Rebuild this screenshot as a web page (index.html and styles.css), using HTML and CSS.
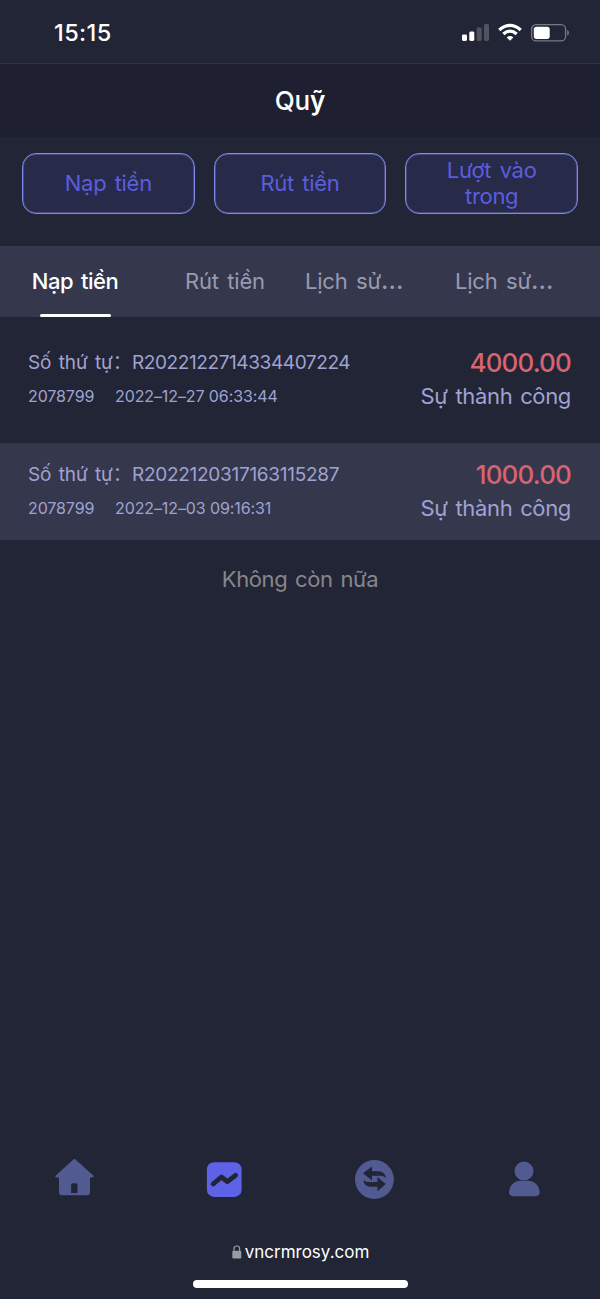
FILE: index.html
```html
<!DOCTYPE html>
<html lang="vi">
<head>
<meta charset="utf-8">
<title>Quỹ</title>
<link rel="stylesheet" href="styles.css">
</head>
<body>
<div class="screen">
  <div class="status">
    <span class="clock">15:15</span>
    <svg class="status-icons" width="108" height="20" viewBox="0 0 108 20">
      <g fill="#fff"><rect x="0" y="11.5" width="5" height="6.5" rx="1.4"/><rect x="7.3" y="8.5" width="5" height="9.5" rx="1.4"/></g>
      <g fill="#52535f"><rect x="14.7" y="4.5" width="5" height="13.5" rx="1.4"/><rect x="22" y="1" width="5" height="17" rx="1.4"/></g>
      <g fill="none" stroke="#fff" stroke-width="3.3"><path d="M37.3 6.9Q48 -2.2 58.7 6.9"/><path d="M41.3 11Q48 5.2 54.7 11"/></g>
      <path d="M44.7 14.4Q48 11.5 51.3 14.4L48 17.8Z" fill="#fff"/>
      <rect x="69.6" y="1.6" width="34" height="16.3" rx="4.5" fill="none" stroke="#777984" stroke-width="1.3"/>
      <rect x="71.8" y="3.7" width="15.9" height="12.2" rx="2.6" fill="#fff"/>
      <path d="M105.2 7Q107 7.7 107 9.8T105.2 12.6Z" fill="#777984"/>
    </svg>
  </div>
  <header class="title">Qu<b>ỹ</b></header>
  <div class="actions">
    <div class="action">Nạp tiền</div>
    <div class="action">Rút tiền</div>
    <div class="action">Lượt vào trong</div>
  </div>
  <nav class="tabs">
    <div class="tab active">Nạp tiền</div>
    <div class="tab">Rút tiền</div>
    <div class="tab clipped">Lịch sử<span class="dots">…</span></div>
    <div class="tab clipped">Lịch sử<span class="dots">…</span></div>
  </nav>
  <main class="records">
    <section class="record first">
      <div class="info">
        <div class="serial"><span class="label">Số thứ tự：</span><span>R2022122714334407224</span></div>
        <div class="meta"><span class="uid">2078799</span><span>2022–12–27 06:33:44</span></div>
      </div>
      <div class="result">
        <div class="amount">4000.00</div>
        <div class="state">Sự thành công</div>
      </div>
    </section>
    <section class="record alt">
      <div class="info">
        <div class="serial"><span class="label">Số thứ tự：</span><span class="number-wide">R2022120317163115287</span></div>
        <div class="meta"><span class="uid">2078799</span><span>2022–12–03 09:16:31</span></div>
      </div>
      <div class="result">
        <div class="amount">1000.00</div>
        <div class="state">Sự thành công</div>
      </div>
    </section>
    <p class="end">Không còn nữa</p>
  </main>
  <nav class="dock">
    <svg width="40" height="40" viewBox="0 0 40 40"><path fill="#515a91" fill-rule="evenodd" d="M18.4 .5Q19.4 -.6 20.5 .5L38.6 16.8Q39 18.3 37.3 18.5H35V33.2Q35 36.3 31.8 36.3H7.2Q4 36.3 4 33.2V18.5H1.6Q-.2 18.3 .5 16.8ZM16.1 34H22.5V25.8Q22.5 24.2 20.9 24.2H17.7Q16.1 24.2 16.1 25.8Z"/></svg>
    <svg width="40" height="40" viewBox="0 0 40 40"><rect x="1.9" y="3.2" width="34.7" height="34.7" rx="7.2" fill="#5d62e6"/><path d="M8.2 25L16.4 18L22.3 22.7L30.6 16.3" fill="none" stroke="#222535" stroke-width="4.8" stroke-linecap="round" stroke-linejoin="round"/></svg>
    <svg width="40" height="40" viewBox="0 0 40 40"><circle cx="19.4" cy="20.5" r="19.4" fill="#515a91"/><path fill="#222535" d="M8 14.3L17 7.5V12.2H23C27.8 12.2 30.8 15.1 30.8 19.1Q28.8 16.8 25 16.8H17V21.5ZM30.8 25.1L22.4 32.2V27.8H16.5C11.5 27.8 8.6 25 8.6 21.2Q10.8 23.1 14.5 23.1H22.4V18Z"/></svg>
    <svg width="40" height="40" viewBox="0 0 40 40"><circle cx="19" cy="12.1" r="9.5" fill="#515a91"/><path fill="#515a91" d="M4 34.2C4 27 9 21.8 15 21.8H23.5C29.5 21.8 34.7 27 34.7 34.2Q33.5 37.2 30 37.2H8.7Q5 37.2 4 34.2Z"/></svg>
  </nav>
  <footer class="browser">
    <div class="address">
      <svg width="10" height="14" viewBox="0 0 10 14"><rect x=".3" y="5.8" width="9" height="7.7" rx="1.2" fill="#9a9ba5"/><path d="M2 6.5V3.8Q2 1 4.8 1T7.6 3.8V6.5" fill="none" stroke="#9a9ba5" stroke-width="1.2"/></svg>
      <span>vncrmrosy.com</span>
    </div>
    <div class="home-bar"></div>
  </footer>
</div>
</body>
</html>
```
FILE: styles.css
```css
* { box-sizing: border-box; }
body { margin: 0; background: #222535; font-family: Inter, "Noto Sans CJK SC", sans-serif; }
.screen { width: 600px; height: 1299px; display: flex; flex-direction: column; background: #222535; overflow: hidden; }
.status { height: 64px; flex: none; display: flex; justify-content: space-between; padding: 0 30px 0 54px; border-bottom: 1px solid #30323d; }
.clock { font-size: 23.5px; line-height: 28px; padding-top: 19px; font-weight: 500; color: #fff; letter-spacing: 0.4px; }
.status-icons { margin-top: 23px; }
.title { height: 73px; flex: none; text-align: center; color: #fff; background: #1e2031; font-size: 26px; line-height: 74px; font-weight: 450; letter-spacing: -0.2px; }
.title b { font-weight: 600; }
.actions { height: 109px; flex: none; display: grid; grid-template-columns: repeat(3, 1fr); gap: 19px; padding: 16px 22px 32px; }
.action { display: flex; align-items: center; justify-content: center; text-align: center; padding: 0 30px 2px; border: 1px solid #8087ee; box-shadow: inset 0 0 0 1px rgba(128, 135, 238, 0.35); border-radius: 14px; background: #282a49; color: #5a5ddf; font-size: 22px; line-height: 26px; font-weight: 400; letter-spacing: -0.3px; word-spacing: 2.5px; }
.tabs { height: 71px; flex: none; display: grid; grid-template-columns: repeat(4, 150px); background: #35374d; }
.tab { position: relative; text-align: center; line-height: 70px; font-size: 22px; font-weight: 400; color: #999bb0; letter-spacing: -0.2px; word-spacing: 2.5px; white-space: nowrap; }
.tab.active { font-weight: 500; color: #fff; letter-spacing: -0.5px; }
.tab.active::after { content: ""; position: absolute; left: 40px; bottom: 0; width: 71px; height: 3px; border-radius: 2px; background: #fff; }
.tab.clipped { text-align: left; padding-left: 5px; }
.dots { font-size: 26px; line-height: 1; }
.records { flex: 1; }
.record { display: flex; justify-content: space-between; padding: 15px 29px 0 28px; height: 97px; color: #a0a2d2; font-weight: 400; }
.record.first { height: 126px; padding-top: 29px; }
.record.alt { background: #35374d; }
.serial { display: flex; font-size: 19px; line-height: 34px; letter-spacing: -0.4px; white-space: nowrap; }
.number-wide { letter-spacing: -0.28px; }
.label { width: 104px; letter-spacing: -0.2px; word-spacing: 2.5px; }
.meta { display: flex; font-size: 16px; line-height: 33px; letter-spacing: -0.1px; }
.uid { width: 87px; }
.result { text-align: right; }
.amount { font-size: 26px; line-height: 34px; font-weight: 550; color: #d9636e; letter-spacing: -0.85px; }
.state { font-size: 22px; line-height: 33px; letter-spacing: -0.35px; word-spacing: 2px; }
.end { margin: 0; text-align: center; font-size: 22px; line-height: 78px; color: #86878b; font-weight: 400; letter-spacing: -0.4px; word-spacing: 2px; }
.dock { height: 64px; flex: none; display: grid; grid-template-columns: repeat(4, 150px); justify-items: center; }
.browser { height: 76px; flex: none; display: flex; flex-direction: column; align-items: center; border-top: 1px solid #252735; }
.address { display: flex; align-items: center; gap: 3px; height: 56px; padding-left: 1px; color: #fff; font-size: 17px; }
.home-bar { width: 215px; height: 8px; border-radius: 4px; background: #fff; }
```
